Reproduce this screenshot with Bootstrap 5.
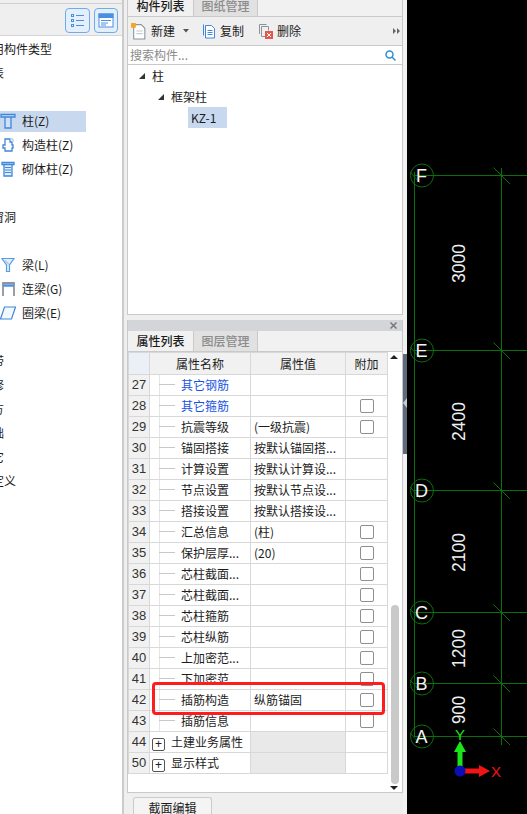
<!DOCTYPE html>
<html lang="zh-CN">
<head>
    <meta charset="UTF-8">
    <meta name="viewport" content="width=device-width, initial-scale=1.0">
    <title>构件列表</title>
    <link href="https://cdn.jsdelivr.net/npm/bootstrap@5.3.0/dist/css/bootstrap.min.css" rel="stylesheet">
    <style>
        html, body { height: 814px; overflow: hidden; }
        body { background: #efefef; color: #1c1c1c; font: 12px/16px "Noto Sans CJK SC", "Liberation Sans", sans-serif; }
        .app-wrap { height: 814px; }

        /* left column */
        .side-pane { width: 124px; flex: none; border-right: 2px solid #cbcbcb; overflow: hidden; }
        .side-top { height: 33px; margin-top: 3px; padding: 4px 4px 0 0; border-top: 1px solid #cfcfcf; border-bottom: 1px solid #d6d6d6; background: #efefef; }
        .view-btn { width: 25px; height: 25px; padding: 0; background: #e4effc; border: 1px solid #6fabeb; border-radius: 4px; line-height: 0; }
        .view-btn + .view-btn { margin-left: 4px; width: 24px; }
        .side-body { height: 778px; background: #fff; padding-top: 1px; }
        .side-row { height: 24px; display: flex; align-items: center; white-space: nowrap; }
        .side-item { width: 86px; height: 21px; display: flex; align-items: center; }
        .side-item svg { width: 16px; height: 16px; flex: none; margin-right: 6px; }
        .side-item.picked { background: #c8d9ef; }
        .cut-one { margin-left: -8px; }
        .cut-two { margin-left: -20px; }

        /* middle column */
        .mid-pane { width: 279px; flex: none; padding: 0 0 0 3px; }
        .box-top { height: 315px; border: 1px solid #c9c9c9; border-top: 0; background: #fff; }
        .box-low { height: 473px; margin-top: 5px; border: 1px solid #c9c9c9; border-top: 0; background: #fff; position: relative; }
        .box-head { height: 11px; background: #d4d5d9; display: flex; justify-content: end; align-items: center; padding-right: 5px; }
        .tab-strip { height: 21px; background: #f1f1f1; border-bottom: 1px solid #c9c9c9; flex-wrap: nowrap; }
        .tab-top { height: 17px; }
        .tab-strip .nav-link { width: 65px; height: 20px; padding: 0; margin: 0; border: 0; border-radius: 0; color: #1c1c1c; font-size: 12px; line-height: 20px; font-weight: 500; background: #f1f1f1; }
        .tab-strip .nav-link.off { background: #e1e1e1; color: #8c8c8c; border-left: 1px solid #c9c9c9; border-right: 1px solid #c9c9c9; }
        .tab-top .nav-link { height: 16px; padding-bottom: 5px; line-height: 11px; }
        .tool-strip { height: 29px; background: #efefef; border-bottom: 1px solid #c9c9c9; padding-left: 3px; position: relative; }
        .tool-item { display: flex; align-items: center; }
        .tool-item svg { flex: none; }
        .tool-gap { margin-left: 13px; }
        .more-mark { margin-left: auto; margin-right: 2px; }
        .find-row { height: 19px; border-bottom: 1px solid #c9c9c9; padding: 0 6px 0 2px; color: #8b8b8b; }
        .tree-row { height: 21px; display: flex; align-items: center; }
        .tree-arrow { width: 0; height: 0; border-style: solid; border-width: 0 0 6px 6px; border-color: transparent transparent #333 transparent; margin-right: 7px; }
        .tree-lv1 { padding-left: 11px; }
        .tree-lv2 { padding-left: 30px; }
        .tree-lv3 { padding-left: 60px; }
        .tree-pick { background: #c8d9ef; width: 39px; height: 21px; padding-left: 3px; line-height: 21px; }

        .grid-wrap { position: relative; padding-right: 15px; height: 441px; }
        .prop-grid { table-layout: fixed; width: 259px; margin: 0; border-color: #d8d8d8; --bs-table-color: #1c1c1c; --bs-table-bg: #fff; }
        .prop-grid td, .prop-grid th { height: 20.9px; padding: 0; line-height: 20px; font-weight: 400; white-space: nowrap; overflow: hidden; vertical-align: middle; }
        .prop-grid thead th { background: #f1f1f1; text-align: center; height: 22px; }
        .prop-grid thead th:first-child { background: #ebf0f6; }
        .prop-grid .num-cell { background: #f1f1f1; text-align: center; color: #333; font-family: "Liberation Sans", sans-serif; font-size: 13px; }
        .name-cell { position: relative; padding-left: 31px !important; }
        .name-cell::before { content: ""; position: absolute; left: 9px; top: 0; bottom: 0; border-left: 1px solid #e6e6e6; }
        .name-cell::after { content: ""; position: absolute; left: 9px; width: 16px; top: 9px; border-top: 1px solid #c8c8c8; }
        .prop-grid .link-text { color: #1a55e0; }
        .val-cell { padding-left: 3px !important; }
        .tick-box { display: block; width: 14px; height: 14px; margin: 0 auto; border: 1px solid #8f8f8f; border-radius: 2px; background: #fff; }
        .group-cell { padding-left: 2px !important; }
        .plus-box { display: inline-block; width: 13px; height: 13px; border: 1px solid #555; border-radius: 2px; line-height: 10px; text-align: center; vertical-align: -1px; margin-right: 6px; font-size: 12px; font-family: "Liberation Sans", sans-serif; }
        .prop-grid .shade-cell { background: #e9e9e9; }
        .mark-frame { position: absolute; left: 24px; top: 330px; width: 233px; height: 33px; border: 3px solid #ff1c1c; border-radius: 4px; pointer-events: none; }
        .scroll-track { position: absolute; right: 1px; top: 0; bottom: 0; width: 13px; }
        .scroll-thumb { position: absolute; left: 3px; width: 8px; top: 253px; height: 179px; background: #c9c9c9; border-radius: 4px; }
        .scroll-up, .scroll-down { position: absolute; left: 2px; width: 0; height: 0; border-left: 4px solid transparent; border-right: 4px solid transparent; }
        .scroll-up { top: 3px; border-bottom: 4px solid #222; }
        .scroll-down { bottom: 3px; border-top: 4px solid #222; }
        .foot-strip { padding: 4px 0 0 6px; }
        .foot-tab { width: 79px; height: 20px; background: #f4f4f4; border: 1px solid #cbcbcb; border-bottom: 0; border-radius: 3px 3px 0 0; text-align: center; line-height: 20px; }

        /* splitter */
        .split-bar { width: 4px; flex: none; background: #f2f2f2; position: relative; }
        .split-mark { position: absolute; left: 0; right: 0; top: 354px; height: 100px; background: #5f6b78; }
        .split-mark::after { content: ""; position: absolute; left: 0; top: 44px; border-style: solid; border-width: 5px 4px 5px 0; border-color: transparent #c6ccd2 transparent transparent; }

        /* drawing */
        .draw-pane { flex: 1 1 auto; background: #000; overflow: hidden; }
        .draw-pane svg { display: block; }
        .axis-label { fill: #f0f0f0; font: 19px "Liberation Sans", sans-serif; }
        .grid-letter { fill: #f4f4f4; font: 18px "Liberation Sans", sans-serif; text-anchor: middle; }
    </style>
</head>
<body>
    <div class="app-wrap d-flex">
        <!-- left -->
        <div class="side-pane">
            <div class="side-top d-flex justify-content-end">
                <button class="view-btn" type="button">
                    <svg width="15" height="15" viewBox="0 0 15 15" fill="none" stroke="#4a90e2"><rect x="1.500" y="1.500" width="2" height="2"/><rect x="1.500" y="6.500" width="2" height="2"/><rect x="1.500" y="11.500" width="2" height="2"/><path d="M6 2.500h8M6 7.500h8M6 12.500h8"/></svg>
                </button>
                <button class="view-btn" type="button">
                    <svg width="16" height="15" viewBox="0 0 16 15" fill="none" stroke="#4a90e2"><rect x="1" y="1" width="14" height="13" fill="#fff"/><rect x="1" y="1" width="14" height="3.500" fill="#4a90e2"/><path d="M3 7.500h10M3 10h7M3 12h5"/></svg>
                </button>
            </div>
            <div class="side-body">
                <div class="side-row"><span class="cut-one">用构件类型</span></div>
                <div class="side-row"><span class="cut-two">报表</span></div>
                <div class="side-row"></div>
                <div class="side-row"><div class="side-item picked">
                    <svg viewBox="0 0 16 16" fill="#cfe0f5" stroke="#3f87dc" stroke-width="1.300"><path d="M1 1.500h14v2.500H1zM5 4h6v11H5z"/></svg><span>柱(Z)</span></div></div>
                <div class="side-row"><div class="side-item">
                    <svg viewBox="0 0 16 16" fill="none" stroke="#3f87dc" stroke-width="1.300"><path d="M5 2h5v3h2v3h1v3h-1v3H5v-3H3V8h2V5z"/><path d="M10 1.500c2 0 3.500 1 3.500 3" stroke="#b9cfe9"/></svg><span>构造柱(Z)</span></div></div>
                <div class="side-row"><div class="side-item">
                    <svg viewBox="0 0 16 16" fill="#e3eefb" stroke="#3f87dc" stroke-width="1.300"><path d="M2 1.500h12v2H2zM4 3.500h8V15H4z"/><path d="M5 6.500h6M5 9h6M5 11.500h6" stroke-width="1"/></svg><span>砌体柱(Z)</span></div></div>
                <div class="side-row"></div>
                <div class="side-row"><span class="cut-two">门窗洞</span></div>
                <div class="side-row"></div>
                <div class="side-row"><div class="side-item">
                    <svg viewBox="0 0 16 16" fill="#e3eefb" stroke="#5b9be0" stroke-width="1.200"><path d="M2 1.500h12L9.500 8v6.500h-3V8z"/><path d="M5 3.500l4 4" stroke="#a9c8ec"/></svg><span>梁(L)</span></div></div>
                <div class="side-row"><div class="side-item">
                    <svg viewBox="0 0 16 16" fill="none" stroke="#8e959c" stroke-width="1.800"><path d="M3 15V2h11v13"/><path d="M3 4.500h11" stroke="#4f93e0" stroke-width="2.500"/></svg><span>连梁(G)</span></div></div>
                <div class="side-row"><div class="side-item">
                    <svg viewBox="0 0 16 16" fill="#f3f8fe" stroke="#3f87dc" stroke-width="1.200"><path d="M4.500 2H15.500L11.500 14H0.500z"/></svg><span>圈梁(E)</span></div></div>
                <div class="side-row"></div>
                <div class="side-row"><span class="cut-two">板带</span></div>
                <div class="side-row"><span class="cut-two">装修</span></div>
                <div class="side-row"><span class="cut-two">土方</span></div>
                <div class="side-row"><span class="cut-two">基础</span></div>
                <div class="side-row"><span class="cut-two">其它</span></div>
                <div class="side-row"><span class="cut-two">自定义</span></div>
            </div>
        </div>

        <!-- middle -->
        <div class="mid-pane">
            <div class="box-top">
                <ul class="nav tab-strip tab-top">
                    <li><button class="nav-link" type="button">构件列表</button></li>
                    <li><button class="nav-link off" type="button">图纸管理</button></li>
                </ul>
                <div class="tool-strip d-flex align-items-center">
                    <div class="tool-item">
                        <svg width="16" height="17" viewBox="0 0 15 16" fill="#fff" stroke="#8a949c"><path d="M2.500 1.500h7l3.500 3.500v10h-10.500z"/><path d="M5 7.500h6M5 10h6" stroke="#c5ccd2"/><rect x="0" y="0" width="4.500" height="4.500" fill="#f5a623" stroke="none"/></svg>
                        <span class="ms-1">新建</span>
                        <svg class="ms-2" width="6" height="4" viewBox="0 0 6 4"><path d="M0 0h6L3 3.500z" fill="#555"/></svg>
                    </div>
                    <div class="tool-item tool-gap">
                        <svg width="14" height="16" viewBox="0 0 14 16" fill="#fff" stroke="#3f87dc"><path d="M1.500 1.500v11"/><path d="M3.500 2.500h6l3 3v9.500h-9z"/><path d="M5.500 7.500h5M5.500 9.500h5M5.500 11.500h5"/></svg>
                        <span class="ms-1">复制</span>
                    </div>
                    <div class="tool-item" style="margin-left:14px">
                        <svg width="15" height="16" viewBox="0 0 15 16" fill="none" stroke="#8a949c"><path d="M1.500 11V1.500h7"/><path d="M3.500 3.500h7v4M3.500 3.500v10h4"/><rect x="7" y="8" width="8" height="8" fill="#e2574c" stroke="none"/><path d="M9 10l4 4M13 10l-4 4" stroke="#fff"/></svg>
                        <span class="ms-1">删除</span>
                    </div>
                    <svg class="more-mark" width="7" height="6" viewBox="0 0 7 6" fill="#666"><path d="M0 0l3 3-3 3zM4 0l3 3-3 3z"/></svg>
                </div>
                <div class="find-row d-flex align-items-center justify-content-between">
                    <span>搜索构件...</span>
                    <svg width="11" height="11" viewBox="0 0 11 11" fill="none" stroke="#2a8fd6" stroke-width="1.500"><circle cx="4.500" cy="4.500" r="3.500"/><path d="M7 7l3.500 3.500"/></svg>
                </div>
                <div class="tree-wrap">
                    <div class="tree-row tree-lv1"><span class="tree-arrow"></span><span>柱</span></div>
                    <div class="tree-row tree-lv2"><span class="tree-arrow"></span><span>框架柱</span></div>
                    <div class="tree-row tree-lv3"><span class="tree-pick">KZ-1</span></div>
                </div>
            </div>

            <div class="box-low">
                <div class="box-head">
                    <svg width="7" height="7" viewBox="0 0 7 7" stroke="#777" stroke-width="1.500"><path d="M0.500 0.500l6 6M6.500 0.500l-6 6"/></svg>
                </div>
                <ul class="nav tab-strip">
                    <li><button class="nav-link" type="button">属性列表</button></li>
                    <li><button class="nav-link off" type="button">图层管理</button></li>
                </ul>
                <div class="grid-wrap">
                    <table class="table table-bordered prop-grid">
                        <colgroup><col style="width:21px"><col style="width:101px"><col style="width:95px"><col style="width:42px"></colgroup>
                        <thead>
                            <tr><th></th><th>属性名称</th><th>属性值</th><th>附加</th></tr>
                        </thead>
                        <tbody>
                            <tr><td class="num-cell">27</td><td class="name-cell link-text">其它钢筋</td><td class="val-cell"></td><td></td></tr>
                            <tr><td class="num-cell">28</td><td class="name-cell link-text">其它箍筋</td><td class="val-cell"></td><td><span class="tick-box"></span></td></tr>
                            <tr><td class="num-cell">29</td><td class="name-cell">抗震等级</td><td class="val-cell">(一级抗震)</td><td><span class="tick-box"></span></td></tr>
                            <tr><td class="num-cell">30</td><td class="name-cell">锚固搭接</td><td class="val-cell">按默认锚固搭...</td><td></td></tr>
                            <tr><td class="num-cell">31</td><td class="name-cell">计算设置</td><td class="val-cell">按默认计算设...</td><td></td></tr>
                            <tr><td class="num-cell">32</td><td class="name-cell">节点设置</td><td class="val-cell">按默认节点设...</td><td></td></tr>
                            <tr><td class="num-cell">33</td><td class="name-cell">搭接设置</td><td class="val-cell">按默认搭接设...</td><td></td></tr>
                            <tr><td class="num-cell">34</td><td class="name-cell">汇总信息</td><td class="val-cell">(柱)</td><td><span class="tick-box"></span></td></tr>
                            <tr><td class="num-cell">35</td><td class="name-cell">保护层厚...</td><td class="val-cell">(20)</td><td><span class="tick-box"></span></td></tr>
                            <tr><td class="num-cell">36</td><td class="name-cell">芯柱截面...</td><td class="val-cell"></td><td><span class="tick-box"></span></td></tr>
                            <tr><td class="num-cell">37</td><td class="name-cell">芯柱截面...</td><td class="val-cell"></td><td><span class="tick-box"></span></td></tr>
                            <tr><td class="num-cell">38</td><td class="name-cell">芯柱箍筋</td><td class="val-cell"></td><td><span class="tick-box"></span></td></tr>
                            <tr><td class="num-cell">39</td><td class="name-cell">芯柱纵筋</td><td class="val-cell"></td><td><span class="tick-box"></span></td></tr>
                            <tr><td class="num-cell">40</td><td class="name-cell">上加密范...</td><td class="val-cell"></td><td><span class="tick-box"></span></td></tr>
                            <tr><td class="num-cell">41</td><td class="name-cell">下加密范...</td><td class="val-cell"></td><td><span class="tick-box"></span></td></tr>
                            <tr><td class="num-cell">42</td><td class="name-cell">插筋构造</td><td class="val-cell">纵筋锚固</td><td><span class="tick-box"></span></td></tr>
                            <tr><td class="num-cell">43</td><td class="name-cell">插筋信息</td><td class="val-cell"></td><td><span class="tick-box"></span></td></tr>
                            <tr><td class="num-cell">44</td><td class="group-cell"><span class="plus-box">+</span>土建业务属性</td><td class="shade-cell"></td><td></td></tr>
                            <tr><td class="num-cell">50</td><td class="group-cell"><span class="plus-box">+</span>显示样式</td><td class="shade-cell"></td><td></td></tr>
                        </tbody>
                    </table>
                    <div class="mark-frame"></div>
                    <div class="scroll-track">
                        <span class="scroll-up"></span>
                        <div class="scroll-thumb"></div>
                        <span class="scroll-down"></span>
                    </div>
                </div>
            </div>
            <div class="foot-strip">
                <div class="foot-tab">截面编辑</div>
            </div>
        </div>

        <div class="split-bar"><div class="split-mark"></div></div>

        <!-- drawing -->
        <div class="draw-pane">
            <svg width="120" height="814" viewBox="407 0 120 814">
                <g stroke="#0b6f0b" fill="none">
                    <path d="M414.500 172V737M501.500 168V745"/>
                    <path d="M414 175.500H527M414 350.500H527M414 490.500H527M414 612.500H527M414 683.500H527M414 736.500H527"/>
                    <path d="M493.500 167.500l16.500 16.500M493.500 342.500l16.500 16.500M493.500 482.500l16.500 16.500M493.500 604.500l16.500 16.500M493.500 675.500l16.500 16.500M493.500 728.500l16.500 16.500"/>
                    <path d="M410 172l10 11M410 347l10 11M410 487l10 11M410 609l10 11M410 680l10 11M410 733l10 11"/>
                    <circle cx="422" cy="175.500" r="11.500"/>
                    <circle cx="422" cy="350.500" r="11.500"/>
                    <circle cx="422" cy="490.500" r="11.500"/>
                    <circle cx="422" cy="612.500" r="11.500"/>
                    <circle cx="422" cy="683.500" r="11.500"/>
                    <circle cx="422" cy="736.500" r="11.500"/>
                </g>
                <text class="grid-letter" x="421.500" y="182">F</text>
                <text class="grid-letter" x="421.500" y="357">E</text>
                <text class="grid-letter" x="421.500" y="497">D</text>
                <text class="grid-letter" x="421.500" y="619">C</text>
                <text class="grid-letter" x="421.500" y="690">B</text>
                <text class="grid-letter" x="421.500" y="743">A</text>
                <text class="axis-label" transform="translate(465 283) rotate(-90)" textLength="39" lengthAdjust="spacingAndGlyphs">3000</text>
                <text class="axis-label" transform="translate(465 441) rotate(-90)" textLength="39" lengthAdjust="spacingAndGlyphs">2400</text>
                <text class="axis-label" transform="translate(465 572) rotate(-90)" textLength="39" lengthAdjust="spacingAndGlyphs">2100</text>
                <text class="axis-label" transform="translate(465 668) rotate(-90)" textLength="39" lengthAdjust="spacingAndGlyphs">1200</text>
                <text class="axis-label" transform="translate(465 724) rotate(-90)" textLength="28" lengthAdjust="spacingAndGlyphs">900</text>
                <path d="M457.500 771V752H454L460 741L466 752H462.500V771z" fill="#19e619"/>
                <path d="M460 768.500H479V765L490 771L479 777V773.500H460z" fill="#f01414"/>
                <circle cx="460" cy="771" r="5.500" fill="#0d0db5"/>
                <text x="460" y="740" fill="#19e619" text-anchor="middle" font-family="Liberation Sans, sans-serif" font-size="15">Y</text>
                <text x="496" y="777" fill="#f01414" text-anchor="middle" font-family="Liberation Sans, sans-serif" font-size="15">X</text>
            </svg>
        </div>
    </div>

    <script src="https://cdn.jsdelivr.net/npm/bootstrap@5.3.0/dist/js/bootstrap.bundle.min.js"></script>
</body>
</html>
